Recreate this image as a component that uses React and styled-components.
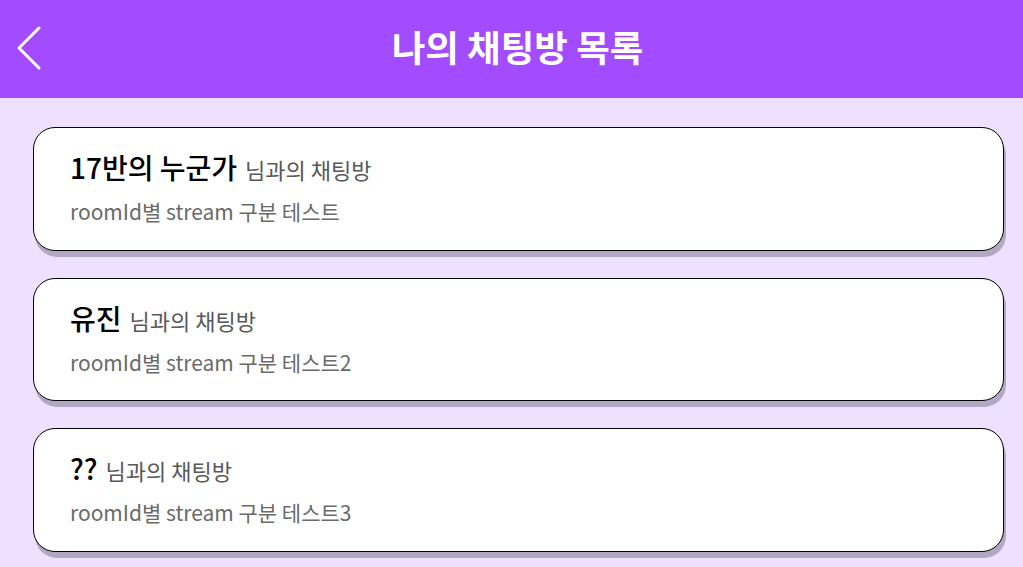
import React from 'react';
import styled, { createGlobalStyle } from 'styled-components';

const GlobalStyle = createGlobalStyle`
  html, body {
    margin: 0;
    padding: 0;
    background: #f0e0ff;
    font-family: "Noto Sans CJK KR", "Noto Sans", sans-serif;
  }
`;

const rooms = [
  { id: 1, name: '17반의 누군가', message: 'roomId별 stream 구분 테스트' },
  { id: 2, name: '유진', message: 'roomId별 stream 구분 테스트2' },
  { id: 3, name: '??', message: 'roomId별 stream 구분 테스트3' },
];

const Page = styled.div`
  min-height: 567px;
  background: #f0e0ff;
`;

const Header = styled.header`
  position: relative;
  height: 98px;
  background: #a24bff;
  display: flex;
  align-items: center;
  justify-content: center;
`;

const BackButton = styled.button`
  position: absolute;
  left: 14px;
  top: 24px;
  width: 32px;
  height: 48px;
  padding: 0;
  border: none;
  background: transparent;
  cursor: pointer;
  display: flex;
  align-items: center;
  justify-content: center;
`;

const Title = styled.h1`
  margin: 0 0 4px 12px;
  color: #fff;
  font-size: 36.5px;
  font-weight: 700;
  line-height: 1;
`;

const List = styled.ul`
  list-style: none;
  margin: 0;
  padding: 29px 19px 0 33px;
  display: flex;
  flex-direction: column;
  gap: 27px;
`;

const Card = styled.li`
  height: 123.5px;
  box-sizing: border-box;
  padding: 21px 36px 0;
  background: #fff;
  border: 1px solid #000;
  border-radius: 22px;
  box-shadow: 2px 6px 0 #b3a8c4;
  cursor: pointer;
`;

const NameRow = styled.div`
  display: flex;
  align-items: baseline;
  gap: 8px;
  line-height: 36px;
`;

const Name = styled.span`
  font-size: 28px;
  font-weight: 500;
  color: #000;
`;

const Suffix = styled.span`
  font-size: 22px;
  color: #585858;
`;

const Message = styled.p`
  margin: 10px 0 0;
  font-size: 21px;
  line-height: 28px;
  color: #6a6a6a;
`;

const ChevronLeft = () => (
  <svg width="32" height="48" viewBox="0 0 32 48" fill="none">
    <path d="M25 4 L5 24 L25 44" stroke="#fff" strokeWidth="3" strokeLinecap="round" strokeLinejoin="round" />
  </svg>
);

export default function App() {
  return (
    <Page>
      <GlobalStyle />
      <Header>
        <BackButton aria-label="뒤로">
          <ChevronLeft />
        </BackButton>
        <Title>나의 채팅방 목록</Title>
      </Header>
      <List>
        {rooms.map((room) => (
          <Card key={room.id}>
            <NameRow>
              <Name>{room.name}</Name>
              <Suffix>님과의 채팅방</Suffix>
            </NameRow>
            <Message>{room.message}</Message>
          </Card>
        ))}
      </List>
    </Page>
  );
}
